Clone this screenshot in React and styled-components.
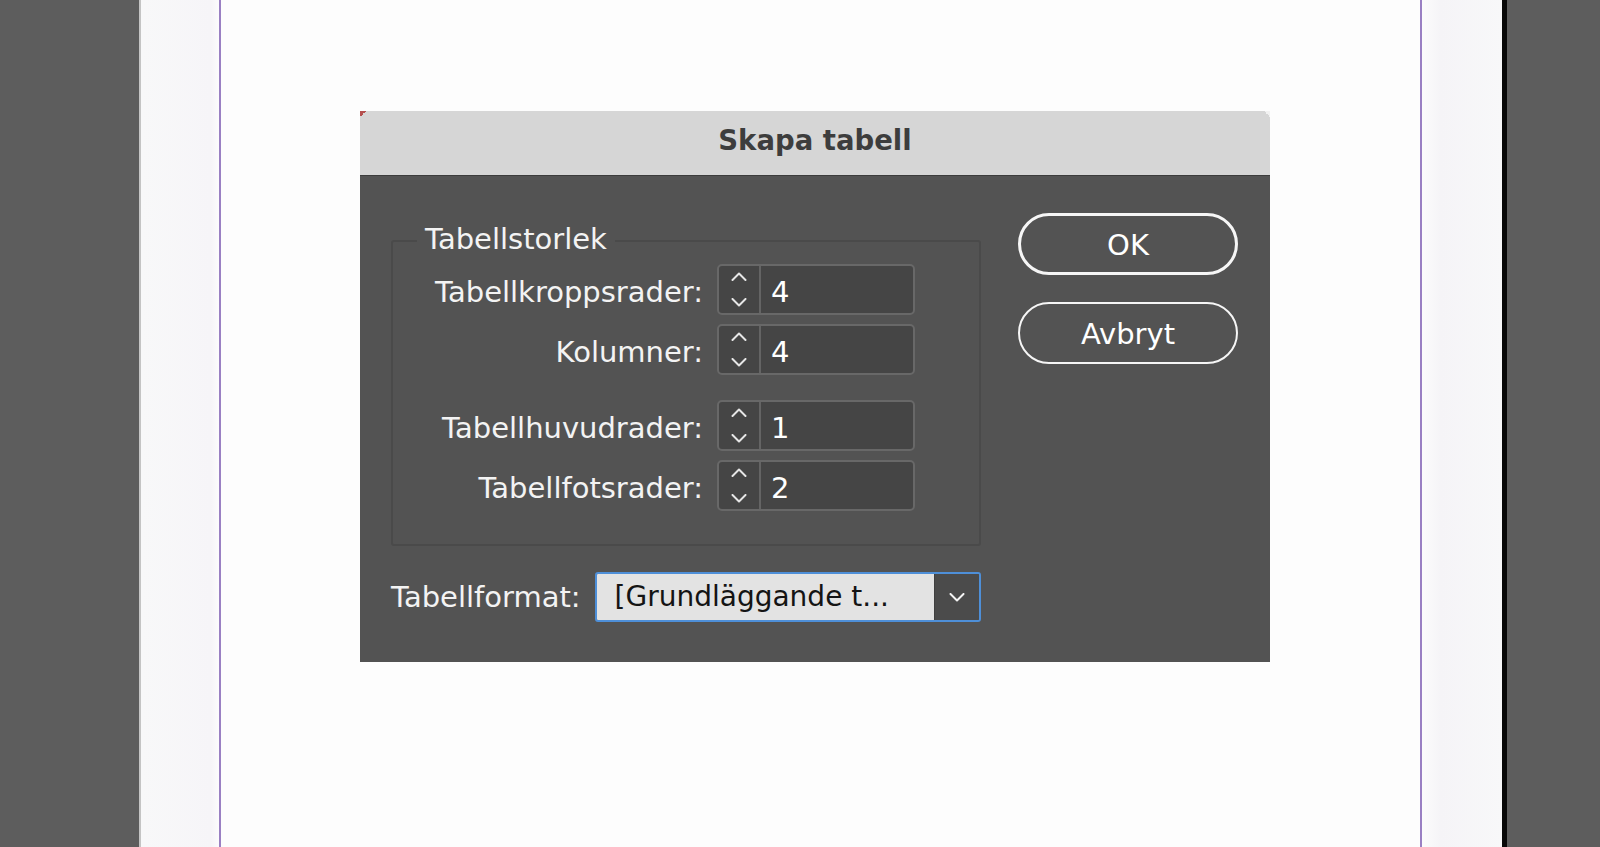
import React from "react";
import styled, { createGlobalStyle } from "styled-components";

const GlobalStyle = createGlobalStyle`
  html, body {
    margin: 0;
    padding: 0;
  }
  body {
    background: #5d5d5d;
    font-family: "DejaVu Sans", "Noto Sans", sans-serif;
    overflow: hidden;
  }
  * { box-sizing: border-box; }
`;

const Workspace = styled.div`
  display: flex;
  width: 1600px;
  height: 847px;
  background: #5d5d5d;
`;

const Gutter = styled.div`
  flex: 0 0 ${(p) => p.$w}px;
  background: #5d5d5d;
`;

const Page = styled.div`
  flex: 0 0 1368px;
  display: flex;
  padding-left: 78px;
  border-left: 2px solid #c4c4c4;
  border-right: 5px solid #080808;
  background: linear-gradient(
    to right,
    #f8f8f9 0px,
    #f6f5f8 70px,
    #fcfcfd 78px,
    #fcfcfc 1280px,
    #f5f4f7 1300px,
    #f8f8f9 1361px
  );
`;

const MarginFrame = styled.div`
  flex: 0 0 1203px;
  display: flex;
  align-items: flex-start;
  border-left: 2px solid #9a80c3;
  border-right: 2px solid #9a80c3;
  background: #fdfdfd;
`;

const Dialog = styled.div`
  position: relative;
  margin: 111px 0 0 139px;
  width: 910px;
  height: 551px;
  display: flex;
  flex-direction: column;

  &::before {
    content: "";
    position: absolute;
    left: 0;
    top: 0;
    width: 6px;
    height: 6px;
    background: linear-gradient(135deg, #b5504f 50%, transparent 50%);
  }
  &::after {
    content: "";
    position: absolute;
    right: 0;
    top: 0;
    width: 6px;
    height: 6px;
    background: linear-gradient(225deg, #f2f2f2 50%, transparent 50%);
  }
`;

const TitleBar = styled.div`
  flex: 0 0 65px;
  display: flex;
  align-items: center;
  justify-content: center;
  padding-bottom: 6px;
  background: #d6d6d6;
  border-bottom: 1px solid #3c3c3c;
  color: #3d3d3d;
  font-weight: bold;
  font-size: 27.5px;
`;

const Body = styled.div`
  flex: 1;
  display: flex;
  gap: 37px;
  padding: 37px 32px 0 31px;
  background: #535353;
`;

const LeftColumn = styled.div`
  width: 590px;
  display: flex;
  flex-direction: column;
  padding-top: 11px;
`;

const Group = styled.fieldset`
  margin: 0;
  min-width: 0;
  border: 2px solid #4a4a4a;
  border-radius: 3px;
  padding: 6px 64px 33px 0;
`;

const Legend = styled.legend`
  margin-left: 24px;
  padding: 0 8px 4px;
  font-size: 29px;
  line-height: 30px;
  color: #f3f3f3;
`;

const Rows = styled.div`
  display: flex;
  flex-direction: column;
  gap: 9px;
`;

const Row = styled.div`
  display: grid;
  grid-template-columns: 1fr 198px;
  column-gap: 14px;
  align-items: center;
  margin-top: ${(p) => (p.$spaced ? 16 : 0)}px;
`;

const Label = styled.span`
  justify-self: end;
  padding-top: ${(p) => (p.$drop ? 5 : 0)}px;
  font-size: 29px;
  color: #f3f3f3;
  white-space: nowrap;
`;

const Spinner = styled.div`
  display: flex;
  height: 51px;
  border: 2px solid #686868;
  border-radius: 5px;
  background: #454545;
  overflow: hidden;
`;

const Stepper = styled.div`
  flex: 0 0 42px;
  display: flex;
  flex-direction: column;
  align-items: center;
  justify-content: center;
  gap: 17px;
  border-right: 2px solid #646464;
`;

const Value = styled.span`
  padding: 5px 0 0 10px;
  font-size: 29px;
  line-height: 42px;
  color: #ffffff;
`;

const FormatRow = styled.div`
  display: flex;
  align-items: center;
  gap: 14px;
  margin-top: 26px;
`;

const Select = styled.div`
  display: flex;
  width: 386px;
  height: 50px;
  border: 2px solid #4e8fd8;
  border-radius: 3px;
  overflow: hidden;
`;

const SelectText = styled.span`
  flex: 1;
  padding-left: 18px;
  background: #e3e3e3;
  color: #141414;
  font-size: 28px;
  line-height: 46px;
  white-space: nowrap;
`;

const SelectArrow = styled.span`
  flex: 0 0 45px;
  display: flex;
  align-items: center;
  justify-content: center;
  background: #4b4b4b;
  border-left: 1px solid #404040;
`;

const ButtonColumn = styled.div`
  width: 220px;
  display: flex;
  flex-direction: column;
  gap: 27px;
`;

const Button = styled.button`
  height: 62px;
  padding: 2px 0 0;
  border-radius: 31px;
  border: ${(p) => (p.$primary ? 3 : 2)}px solid #f6f6f6;
  background: transparent;
  color: #ffffff;
  font-family: inherit;
  font-size: 29px;
  cursor: pointer;
`;

const Chevron = ({ up, color = "#e6e6e6" }) => (
  <svg width="16" height="9" viewBox="0 0 16 9" fill="none">
    <path
      d={up ? "M1.5 8 L8 1.5 L14.5 8" : "M1.5 1 L8 7.5 L14.5 1"}
      stroke={color}
      strokeWidth="2"
      strokeLinecap="round"
      strokeLinejoin="round"
    />
  </svg>
);

const sizeFields = [
  { label: "Tabellkroppsrader:", value: "4" },
  { label: "Kolumner:", value: "4" },
  { label: "Tabellhuvudrader:", value: "1", spaced: true },
  { label: "Tabellfotsrader:", value: "2" },
];

export default function App() {
  return (
    <>
      <GlobalStyle />
      <Workspace>
        <Gutter $w={139} />
        <Page>
          <MarginFrame>
            <Dialog>
              <TitleBar>Skapa tabell</TitleBar>
              <Body>
                <LeftColumn>
                  <Group>
                    <Legend>Tabellstorlek</Legend>
                    <Rows>
                      {sizeFields.map((f) => (
                        <Row key={f.label} $spaced={f.spaced}>
                          <Label $drop>{f.label}</Label>
                          <Spinner>
                            <Stepper>
                              <Chevron up />
                              <Chevron />
                            </Stepper>
                            <Value>{f.value}</Value>
                          </Spinner>
                        </Row>
                      ))}
                    </Rows>
                  </Group>
                  <FormatRow>
                    <Label>Tabellformat:</Label>
                    <Select>
                      <SelectText>[Grundläggande t...</SelectText>
                      <SelectArrow>
                        <Chevron color="#f4f4f4" />
                      </SelectArrow>
                    </Select>
                  </FormatRow>
                </LeftColumn>
                <ButtonColumn>
                  <Button $primary>OK</Button>
                  <Button>Avbryt</Button>
                </ButtonColumn>
              </Body>
            </Dialog>
          </MarginFrame>
        </Page>
        <Gutter $w={93} />
      </Workspace>
    </>
  );
}
